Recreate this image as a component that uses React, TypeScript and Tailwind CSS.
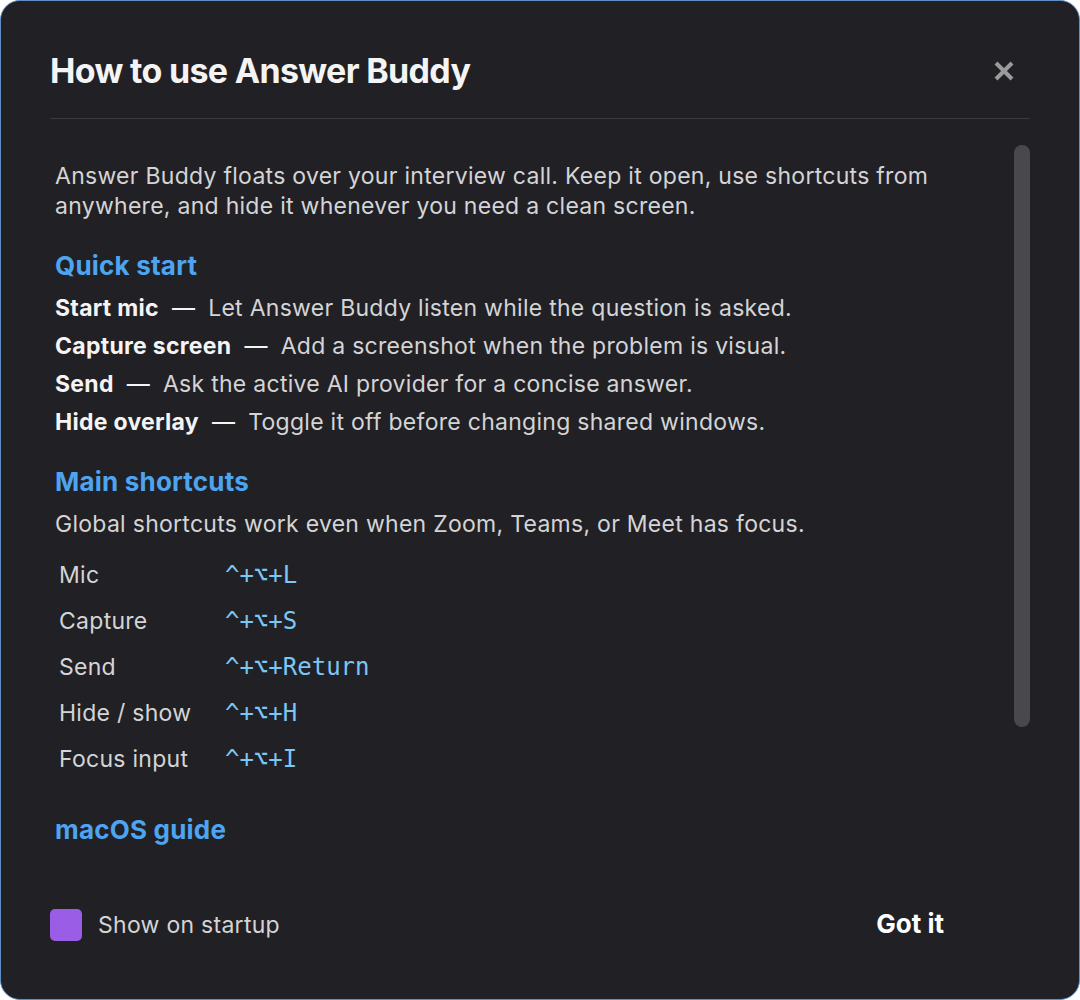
const quick = [
  { label: "Start mic", text: "Let Answer Buddy listen while the question is asked." },
  { label: "Capture screen", text: "Add a screenshot when the problem is visual." },
  { label: "Send", text: "Ask the active AI provider for a concise answer." },
  { label: "Hide overlay", text: "Toggle it off before changing shared windows." },
];

const shortcuts = [
  { name: "Mic", keys: "^+⌥+L" },
  { name: "Capture", keys: "^+⌥+S" },
  { name: "Send", keys: "^+⌥+Return" },
  { name: "Hide / show", keys: "^+⌥+H" },
  { name: "Focus input", keys: "^+⌥+I" },
];

export default function App() {
  return (
    <div className="w-[1080px] h-[1000px] bg-white font-['Inter','Liberation_Sans',sans-serif]">
      <div className="relative flex h-full flex-col rounded-[20px] border border-[#5e90c6] bg-[#212125] overflow-hidden">
        {/* header */}
        <div className="mx-[49px] flex h-[118px] items-start justify-between border-b border-[#3a3a3f] pt-[46px]">
          <h1 className="text-[34px] leading-[48px] font-bold tracking-[-0.02em] text-[#f4f4f5]">
            How to use Answer Buddy
          </h1>
          <button className="mr-[15px] mt-[13px] text-[#9b9b9e]">
            <svg width="22" height="22" viewBox="0 0 22 22">
              <path d="M3 3 L19 19 M19 3 L3 19" stroke="currentColor" strokeWidth="4" strokeLinecap="butt" />
            </svg>
          </button>
        </div>

        {/* body */}
        <div className="relative flex-1 pl-[54px] pr-[90px] pt-[42px] text-[23px] tracking-[0.012em] text-[#d4d4d6]">
          <div className="absolute right-[49px] top-[26px] h-[582px] w-[16px] rounded-full bg-[#48484d]" />

          <p className="leading-[30px]">
            Answer Buddy floats over your interview call. Keep it open, use shortcuts from anywhere, and hide it
            whenever you need a clean screen.
          </p>

          <h2 className="mt-[29px] text-[26px] leading-[32px] font-bold tracking-[0.008em] text-[#4ea4ef]">Quick start</h2>
          <div className="mt-[7px]">
            {quick.map((q) => (
              <div key={q.label} className="leading-[38px]">
                <span className="font-bold text-[#f4f4f5]">{q.label}</span>
                <span className="mx-[13px] text-[#f4f4f5]">—</span>
                <span>{q.text}</span>
              </div>
            ))}
          </div>

          <h2 className="mt-[25px] text-[26px] leading-[32px] font-bold tracking-[0.008em] text-[#4ea4ef]">Main shortcuts</h2>
          <p className="mt-[11px] leading-[30px]">Global shortcuts work even when Zoom, Teams, or Meet has focus.</p>

          <div className="mt-[13px]">
            {shortcuts.map((s) => (
              <div key={s.name} className="flex leading-[46px]">
                <span className="w-[170px] pl-[4px]">{s.name}</span>
                <span className="font-['DejaVu_Sans_Mono','Liberation_Mono',monospace] text-[24px] tracking-normal text-[#7cc6f4]">
                  {s.keys}
                </span>
              </div>
            ))}
          </div>

          <h2 className="mt-[32px] text-[26px] leading-[32px] font-bold tracking-[0.008em] text-[#4ea4ef]">macOS guide</h2>
        </div>

        {/* footer */}
        <div className="flex h-[150px] items-start justify-between pl-[49px] pr-[135px] pt-[59px]">
          <label className="flex items-center gap-[16px] text-[23px] tracking-[0.012em] text-[#d4d4d6]">
            <span className="h-[32px] w-[32px] rounded-[5px] bg-[#9a5de6]" />
            Show on startup
          </label>
          <button className="text-[26px] leading-[32px] font-bold text-white">Got it</button>
        </div>
      </div>
    </div>
  );
}
